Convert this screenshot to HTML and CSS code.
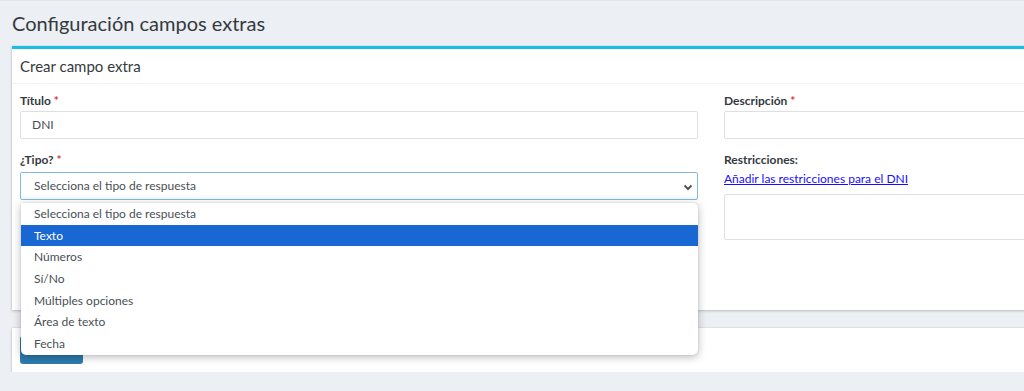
FILE: index.html
```html
<!DOCTYPE html>
<html lang="es">
<head>
  <meta charset="UTF-8">
  <meta name="viewport" content="width=device-width, initial-scale=1.0">
  <title>Configuración campos extras</title>
  <link rel="stylesheet" href="styles.css">
</head>
<body>
  <div class="page">
    <h1 class="page-title">Configuración campos extras</h1>

    <div class="card card-info">
      <div class="card-header">Crear campo extra</div>
      <div class="card-body">
        <div class="col">
          <div class="field">
            <label class="label">Título <span class="req">*</span></label>
            <div class="input">DNI</div>
          </div>
          <div class="field">
            <label class="label">¿Tipo? <span class="req">*</span></label>
            <div class="select-wrap">
              <div class="input select">
                Selecciona el tipo de respuesta
                <svg class="chevron" width="10" height="7" viewBox="0 0 10 7">
                  <path d="M1.5 1.5 L5 5 L8.5 1.5" fill="none" stroke="#555" stroke-width="2"/>
                </svg>
              </div>
              <!-- Open dropdown list -->
              <ul class="dropdown">
                <li>Selecciona el tipo de respuesta</li>
                <li class="selected">Texto</li>
                <li>Números</li>
                <li>Sí/No</li>
                <li>Múltiples opciones</li>
                <li>Área de texto</li>
                <li>Fecha</li>
              </ul>
            </div>
          </div>
        </div>
        <div class="col">
          <div class="field">
            <label class="label">Descripción <span class="req">*</span></label>
            <div class="input"></div>
          </div>
          <div class="field">
            <label class="label">Restricciones:</label>
            <a class="link" href="#">Añadir las restricciones para el DNI</a>
            <div class="textarea"></div>
          </div>
        </div>
      </div>
    </div>

    <div class="card card-footer">
      <button class="btn">Guardar</button>
    </div>
  </div>
</body>
</html>
```

FILE: styles.css
```css
body {
  margin: 0;
  background-color: #eceff3;
  font-family: "Source Sans Pro", Lato, "Noto Sans", sans-serif;
  color: #343a40;
  overflow: hidden;
}

.page {
  padding: 0 12px;
  width: 1420px;
  border-top: 1px solid #e2e5ea;
}

.page-title {
  margin: 0;
  padding: 10px 0 11px;
  font-size: 20px;
  font-weight: 400;
  line-height: 24px;
  color: #343a40;
}

.card {
  background: #fff;
  box-shadow: 0 0 1px rgba(0, 0, 0, 0.13), 0 1px 3px rgba(0, 0, 0, 0.2);
}

.card-info {
  border-top: 3px solid #17bfe6;
}

.card-header {
  padding: 8px 8px 0;
  height: 26px;
  font-size: 15px;
  line-height: 18px;
  border-bottom: 1px solid #f2f2f2;
}

.card-body {
  display: grid;
  grid-template-columns: 678px 678px;
  gap: 26px;
  padding: 9px 8px 57px;
}

.field {
  margin-bottom: 13px;
}

.label {
  display: block;
  font-size: 12px;
  font-weight: 700;
  line-height: 16px;
  margin-bottom: 2px;
  color: #343a40;
}

.req {
  color: #dc3545;
}

.input {
  box-sizing: border-box;
  height: 28px;
  border: 1px solid #dcdfe4;
  border-radius: 2px;
  padding: 0 11px;
  font-size: 12px;
  line-height: 26px;
  color: #495057;
}

.select-wrap {
  position: relative;
  margin-top: 4px;
}

.select {
  position: relative;
  padding-left: 13px;
  border-color: #7fb8e0;
  box-shadow: inset 0 -6px 6px -6px rgba(0, 0, 0, 0.08);
}

.chevron {
  position: absolute;
  right: 4px;
  top: 11px;
}

.dropdown {
  position: absolute;
  z-index: 2;
  top: 31px;
  left: 1px;
  right: 0;
  margin: 0;
  padding: 0;
  list-style: none;
  background: #fff;
  border-radius: 0 4px 5px 5px;
  box-shadow: 0 2px 8px rgba(0, 0, 0, 0.28), 0 0 1px rgba(0, 0, 0, 0.3);
  font-size: 12px;
  color: #495057;
}

.dropdown li {
  height: 21.7px;
  line-height: 21px;
  padding-left: 13px;
}

.dropdown li.selected {
  background: #1967d2;
  color: #fff;
}

.link {
  display: block;
  font-size: 12px;
  line-height: 16px;
  color: #1a0dff;
  margin: 3px 0 7px;
}

.textarea {
  height: 44px;
  border: 1px solid #dcdfe4;
  border-radius: 2px;
}

.card-footer {
  margin-top: 18px;
  padding: 8px;
}

.btn {
  background: #2c7bb0;
  color: #fff;
  border: none;
  border-radius: 3px;
  width: 63px;
  height: 28px;
  font-family: inherit;
  font-size: 12px;
}
```
